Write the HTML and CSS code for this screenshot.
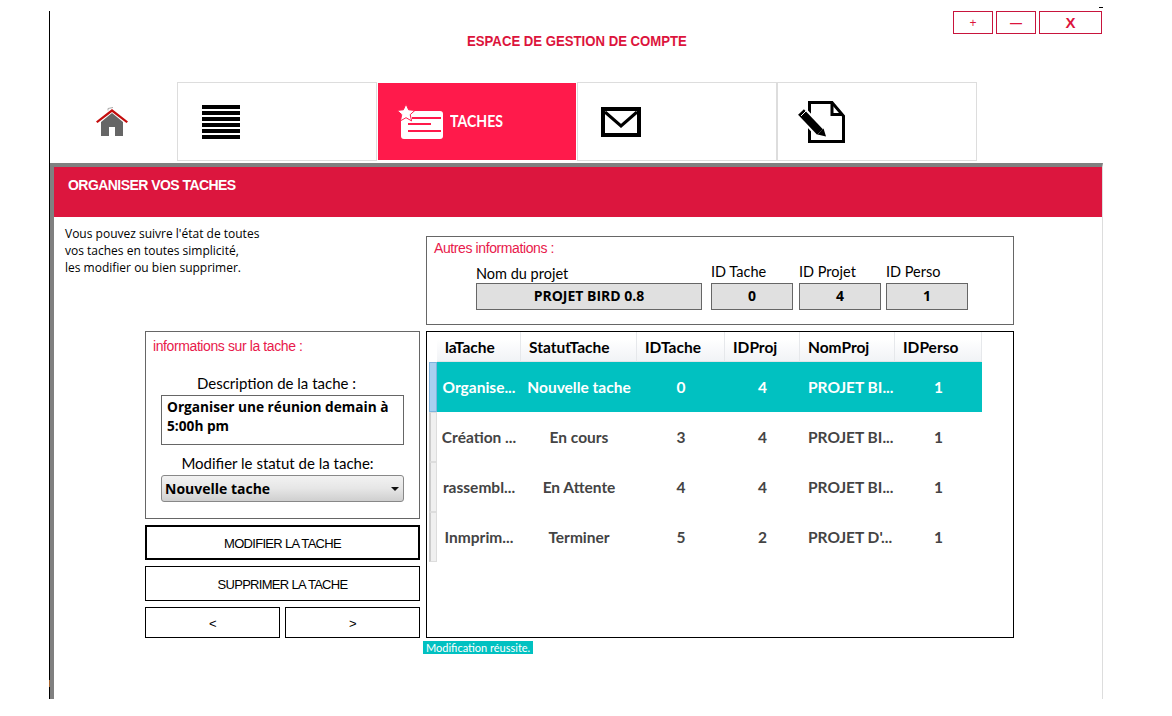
FILE: index.html
```html
<!DOCTYPE html>
<html>
<head>
<title>Espace de gestion de compte</title>
<link rel="stylesheet" href="styles.css">
</head>
<body>

<div id="app">
    <div id="header">
        <div></div>
        <h1>ESPACE DE GESTION DE COMPTE</h1>
        <div id="win-buttons">
            <button class="win-btn">+</button>
            <button class="win-btn win-min">&mdash;</button>
            <button class="win-btn win-close">X</button>
        </div>
    </div>

    <div id="nav">
        <div class="home">
            <svg width="32" height="30" viewBox="0 0 32 30">
                <path d="M5 29V15L16 6l11 9v14h-8v-9h-6v9z" fill="#666"/>
                <path d="M0 14.500 16 2l16 12.500-1.500 1.500L16 5 1.500 16z" fill="#c40d0d"/>
                <path d="M12 3.500V1.500l5-1" stroke="#aaa" fill="none"/>
            </svg>
        </div>
        <div class="tab tab-list">
            <svg width="38" height="34" viewBox="0 0 38 34">
                <path d="M0 0h38v4H0zM0 6h38v4H0zM0 12h38v4H0zM0 18h38v4H0zM0 24h38v4H0zM0 30h38v4H0z"/>
            </svg>
        </div>
        <div class="tab tab-active">
            <svg width="48" height="36" viewBox="0 0 48 36">
                <rect x="5" y="7" width="42" height="28" rx="3" fill="#fff"/>
                <path d="M10 0l2.600 5.800 6.400.6-4.800 4.200 1.400 6.300L10 13.700 4.400 16.900l1.400-6.300L1 6.400l6.400-.6z" fill="#fff" stroke="#ff1a4b"/>
                <path d="M16 14h29M12 20h23M12 27h33" stroke="#ff1a4b" stroke-width="2" fill="none"/>
            </svg>
            <span>TACHES</span>
        </div>
        <div class="tab">
            <svg width="40" height="30" viewBox="0 0 40 30">
                <path d="M2 2h36v26H2z" fill="#fff" stroke="#000" stroke-width="4"/>
                <path d="M4 5l16 14L36 5" fill="none" stroke="#000" stroke-width="3"/>
            </svg>
        </div>
        <div class="tab tab-doc">
            <svg width="48" height="42" viewBox="0 0 48 42">
                <path d="M12.500 1.500H35L46.500 15v25.500h-34z" fill="#fff" stroke="#000" stroke-width="3"/>
                <path d="M35 2v11.500h11" fill="none" stroke="#000" stroke-width="3"/>
                <path d="M4 11l19 20" stroke="#fff" stroke-width="12" fill="none"/>
                <path d="M4 11l19 20" stroke="#000" stroke-width="8" fill="none"/>
                <path d="M6 8l-5 5" stroke="#fff" stroke-width="1" fill="none" transform="translate(3 2)"/>
                <path d="M20.500 33.500l6-6 2.500 8z" fill="#000"/>
            </svg>
        </div>
    </div>

    <div id="panel">
        <div id="band">ORGANISER VOS TACHES</div>

        <div class="row-top">
            <p class="intro">Vous pouvez suivre l'état de toutes<br>vos taches en toutes simplicité,<br>les modifier ou bien supprimer.</p>
            <div class="autres">
                <div class="legend">Autres informations :</div>
                <div class="fields">
                    <div class="field field-nom">
                        <label>Nom du projet</label>
                        <div class="value">PROJET BIRD 0.8</div>
                    </div>
                    <div class="field field-id">
                        <label>ID Tache</label>
                        <div class="value">0</div>
                    </div>
                    <div class="field">
                        <label>ID Projet</label>
                        <div class="value">4</div>
                    </div>
                    <div class="field field-last">
                        <label>ID Perso</label>
                        <div class="value">1</div>
                    </div>
                </div>
            </div>
        </div>

        <div class="row-main">
            <div class="left-col">
                <div class="info-box">
                    <div class="legend">informations sur la tache :</div>
                    <div class="cap cap-desc">Description de la tache :</div>
                    <div class="desc">Organiser une réunion demain à 5:00h pm</div>
                    <div class="cap cap-statut">Modifier le statut de la tache:</div>
                    <div class="select">Nouvelle tache</div>
                </div>
                <button class="btn btn-main">MODIFIER LA TACHE</button>
                <button class="btn">SUPPRIMER LA TACHE</button>
                <div class="pager">
                    <button class="btn btn-page">&lt;</button>
                    <button class="btn btn-page">&gt;</button>
                </div>
            </div>

            <div class="grid-box">
                <table>
                    <colgroup>
                        <col class="c-strip"><col class="c-tache"><col class="c-statut"><col class="c-idt"><col class="c-idp"><col class="c-nom"><col class="c-perso">
                    </colgroup>
                    <thead>
                        <tr><th class="strip"></th><th>laTache</th><th>StatutTache</th><th>IDTache</th><th>IDProj</th><th>NomProj</th><th>IDPerso</th></tr>
                    </thead>
                    <tbody>
                        <tr class="selected"><td class="strip"></td><td>Organise...</td><td>Nouvelle tache</td><td>0</td><td>4</td><td class="nom">PROJET BI...</td><td>1</td></tr>
                        <tr><td class="strip"></td><td>Création ...</td><td>En cours</td><td>3</td><td>4</td><td class="nom">PROJET BI...</td><td>1</td></tr>
                        <tr><td class="strip"></td><td>rassembl...</td><td>En Attente</td><td>4</td><td>4</td><td class="nom">PROJET BI...</td><td>1</td></tr>
                        <tr><td class="strip"></td><td>Inmprim...</td><td>Terminer</td><td>5</td><td>2</td><td class="nom">PROJET D'...</td><td>1</td></tr>
                    </tbody>
                </table>
            </div>
        </div>

        <div class="status"><span>Modification réussite.</span></div>
    </div>
</div>

</body>
</html>
```

FILE: styles.css
```css
body {
    margin: 0;
    background: #fff;
    font-family: "Liberation Sans", sans-serif;
    color: #000;
}
button {
    font-family: inherit;
    background: #fff;
    cursor: pointer;
}
#app {
    position: relative;
    width: 1053px;
    height: 688px;
    margin: 11px 0 0 49px;
    border-left: 1px solid #000;
    display: flex;
    flex-direction: column;
}
#app::before {
    content: "";
    position: absolute;
    top: -4px;
    right: 0;
    width: 4px;
    height: 1px;
    background: #000;
}
#app::after {
    content: "";
    position: absolute;
    top: 669px;
    left: -1px;
    width: 1px;
    height: 7px;
    background: #a8652e;
}
#header {
    height: 71px;
    display: grid;
    grid-template-columns: 1fr auto 1fr;
}
#header h1 {
    margin: 22px 0 0;
    font-size: 14px;
    line-height: 16px;
    color: #dc143c;
    transform: scaleX(0.94);
}
#win-buttons {
    justify-self: end;
    display: flex;
    gap: 3px;
    margin-right: 1px;
}
.win-btn {
    width: 40px;
    height: 23px;
    padding: 0;
    border: 1px solid #c8143c;
    color: #dc143c;
    font-size: 12px;
}
.win-min {
    font-weight: bold;
}
.win-close {
    width: 63px;
    font-size: 15px;
    font-weight: bold;
}

#nav {
    height: 79px;
    margin-bottom: 2px;
    display: flex;
}
.home {
    width: 127px;
    padding-right: 4px;
    box-sizing: border-box;
    display: flex;
    align-items: center;
    justify-content: center;
}
.tab {
    width: 200px;
    box-sizing: border-box;
    border: 1px solid #ddd;
    padding-left: 23px;
    display: flex;
    align-items: center;
}
.tab svg {
    display: block;
}
.tab-list {
    padding-left: 24px;
}
.tab-active {
    width: 198px;
    margin: 1px;
    border: 0;
    padding-left: 18px;
    background: #ff1a4b;
    color: #fff;
    font-family: "Lato", sans-serif;
    font-size: 17px;
    font-weight: bold;
}
.tab-active span {
    display: inline-block;
    margin: -2px 0 0 6px;
    transform: scaleX(0.83);
    transform-origin: left;
}
.tab-doc {
    padding-left: 19px;
}

#panel {
    flex: 1;
    border-top: 4px solid #808080;
    border-left: 4px solid #808080;
    border-right: 1px solid #ddd;
}
#band {
    height: 50px;
    box-sizing: border-box;
    padding: 10px 0 0 14px;
    background: #dc163e;
    color: #fff;
    font-size: 14px;
    font-weight: bold;
    letter-spacing: -0.55px;
    line-height: 16px;
}

.row-top {
    display: flex;
    padding-top: 19px;
}
.intro {
    width: 361px;
    margin: -11px 0 0;
    padding: 0 0 0 11px;
    font-family: "Open Sans", sans-serif;
    font-size: 12px;
    line-height: 17px;
}
.legend {
    font-size: 14px;
    letter-spacing: -0.4px;
    line-height: 16px;
    color: #e8194b;
}
.autres {
    width: 588px;
    height: 89px;
    box-sizing: border-box;
    border: 1px solid #666;
    padding: 3px 7px;
}
.fields {
    display: flex;
    align-items: flex-end;
    gap: 6px;
    margin: 6px 0 0 42px;
}
.field label {
    display: block;
    padding-bottom: 2px;
    font-family: "Lato", sans-serif;
    font-size: 14.500px;
    line-height: 19px;
}
.field .value {
    width: 82px;
    height: 27px;
    box-sizing: border-box;
    border: 1px solid #666;
    background: #e0e0e0;
    font-family: "Open Sans", sans-serif;
    font-size: 14px;
    font-weight: bold;
    line-height: 24px;
    text-align: center;
}
.field-nom .value {
    width: 226px;
}
.field-nom label {
    padding-bottom: 0;
}
.field-id {
    margin-left: 3px;
}
.field-last {
    margin-left: -1px;
}

.row-main {
    display: flex;
    gap: 6px;
    padding: 6px 0 0 91px;
}
.left-col {
    width: 275px;
    display: flex;
    flex-direction: column;
    gap: 6px;
}
.info-box {
    height: 188px;
    box-sizing: border-box;
    border: 1px solid #666;
    padding: 6px 15px;
}
.info-box .legend {
    margin-left: -8px;
}
.cap {
    padding-right: 12px;
    font-family: "Lato", sans-serif;
    font-size: 15px;
    line-height: 20px;
    text-align: center;
}
.cap-desc {
    margin-top: 19px;
    margin-bottom: 2px;
}
.cap-statut {
    margin-top: 8px;
    margin-bottom: 2px;
    padding-right: 10px;
}
.desc {
    height: 50px;
    box-sizing: border-box;
    border: 1px solid #666;
    padding: 1px 5px;
    font-family: "Open Sans", sans-serif;
    font-size: 13.700px;
    font-weight: bold;
    line-height: 19px;
}
.select {
    position: relative;
    height: 27px;
    box-sizing: border-box;
    border: 1px solid #888;
    border-radius: 3px;
    padding-left: 3px;
    background: linear-gradient(#f2f2f2, #e6e6e6 50%, #cfcfcf);
    font-family: "Open Sans", sans-serif;
    font-size: 14px;
    font-weight: bold;
    line-height: 25px;
}
.select::after {
    content: "";
    position: absolute;
    top: 11px;
    right: 4px;
    border: 4px solid transparent;
    border-top: 4px solid #111;
    border-bottom: 0;
}
.btn {
    height: 35px;
    padding: 2px 0 0;
    border: 1px solid #000;
    font-size: 13px;
    letter-spacing: -0.7px;
    color: #000;
}
.btn-main {
    border-width: 2px;
}
.pager {
    display: flex;
    gap: 5px;
}
.btn-page {
    flex: 1;
    height: 31px;
}

.grid-box {
    width: 588px;
    height: 307px;
    box-sizing: border-box;
    border: 1px solid #000;
    padding-left: 2px;
}
table {
    width: 553px;
    table-layout: fixed;
    border-collapse: separate;
    border-spacing: 0;
    font-family: "Lato", sans-serif;
    font-size: 15.500px;
    font-weight: bold;
}
.c-strip { width: 8px; }
.c-tache { width: 84px; }
.c-statut { width: 116px; }
.c-idt { width: 88px; }
.c-idp { width: 75px; }
.c-nom { width: 95px; }
.c-perso { width: 87px; }
th {
    height: 30px;
    padding: 0 0 0 8px;
    box-sizing: border-box;
    border-right: 1px solid #e6e8eb;
    border-bottom: 1px solid #e2e4e7;
    background: linear-gradient(#fff 25%, #f1f3f6);
    text-align: left;
    overflow: hidden;
    white-space: nowrap;
}
th.strip {
    background: #fff;
    border: 0;
}
td {
    height: 50px;
    box-sizing: border-box;
    padding: 0;
    color: #444;
    text-align: center;
    white-space: nowrap;
}
td.nom {
    padding-left: 8px;
    text-align: left;
}
td.strip {
    border: 1px solid #ddd;
    border-left: 2px solid #ccc;
    background: #f0f0f0;
}
.selected td {
    background: #01c1c1;
    color: #fff;
}
.selected td.strip {
    border: 1px solid #7fb4de;
    background: #a8d0f0;
}
.status {
    margin: 3px 0 0 369px;
    font-family: "Lato", sans-serif;
    font-size: 11px;
    line-height: 13px;
}
.status span {
    display: inline-block;
    padding: 0 3px;
    background: #01c1c1;
    color: #fff;
}
```
